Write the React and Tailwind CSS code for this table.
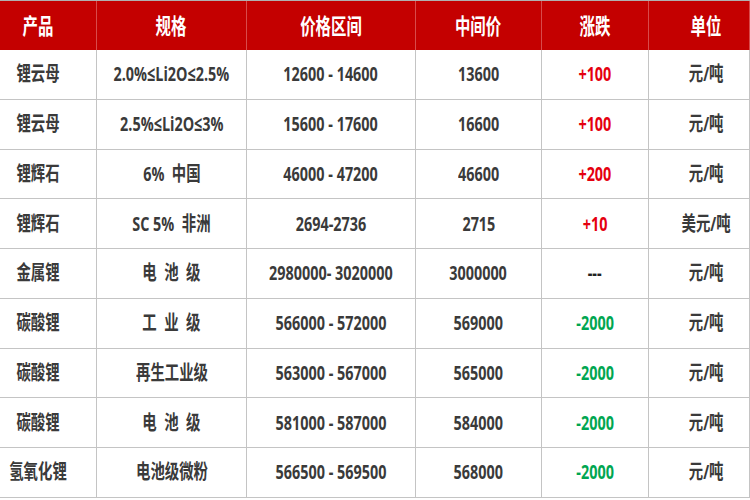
const rows = [
    ["锂云母", "2.0%≤Li2O≤2.5%", "12600 - 14600", "13600", "+100", "元/吨"],
    ["锂云母", "2.5%≤Li2O≤3%", "15600 - 17600", "16600", "+100", "元/吨"],
    ["锂辉石", "6%  中国", "46000 - 47200", "46600", "+200", "元/吨"],
    ["锂辉石", "SC 5%  非洲", "2694-2736", "2715", "+10", "美元/吨"],
    ["金属锂", "电  池  级", "2980000- 3020000", "3000000", "---", "元/吨"],
    ["碳酸锂", "工  业  级", "566000 - 572000", "569000", "-2000", "元/吨"],
    ["碳酸锂", "再生工业级", "563000 - 567000", "565000", "-2000", "元/吨"],
    ["碳酸锂", "电  池  级", "581000 - 587000", "584000", "-2000", "元/吨"],
    ["氢氧化锂", "电池级微粉", "566500 - 569500", "568000", "-2000", "元/吨"],
];

const heads = ["产品", "规格", "价格区间", "中间价", "涨跌", "单位"];

// first and last columns sit a bit off-centre in the picture
const pad = ["pr-5", "", "", "", "", "pl-[14px]"];

const changeColor = (v) => {
    if (v.startsWith("+")) return "text-[#e5000f]";
    if (v.startsWith("-") && v !== "---") return "text-[#00a651]";
    return "text-[#222222]";
};

const App = () => {
    return (
        <div
            className="w-[750px] h-[500px] bg-white overflow-hidden border-t border-[#b0b0b0]"
            style={{ fontFamily: '"Open Sans", "Noto Sans CJK SC", sans-serif' }}
        >
            <div className="grid grid-cols-[97px_150px_169px_126px_107px_101px]">
                {heads.map((h, i) => (
                    <div
                        key={h}
                        className={`h-[49px] bg-[#c40000] border-r border-[#d84a4a] flex items-center justify-center text-white text-[22px] font-bold ${pad[i]}`}
                    >
                        <span className="inline-block scale-x-[0.7] whitespace-pre">{h}</span>
                    </div>
                ))}
                {rows.map((r, ri) =>
                    r.map((c, ci) => (
                        <div
                            key={ri + "-" + ci}
                            className={`h-[49.75px] border-r border-b border-[#c4c4c4] flex items-center justify-center text-[20px] font-bold ${
                                ci === 4 ? changeColor(c) : "text-[#3a3a3a]"
                            } ${pad[ci]}`}
                        >
                            <span className="inline-block scale-x-[0.72] whitespace-pre">{c}</span>
                        </div>
                    ))
                )}
            </div>
        </div>
    );
};

export default App;
